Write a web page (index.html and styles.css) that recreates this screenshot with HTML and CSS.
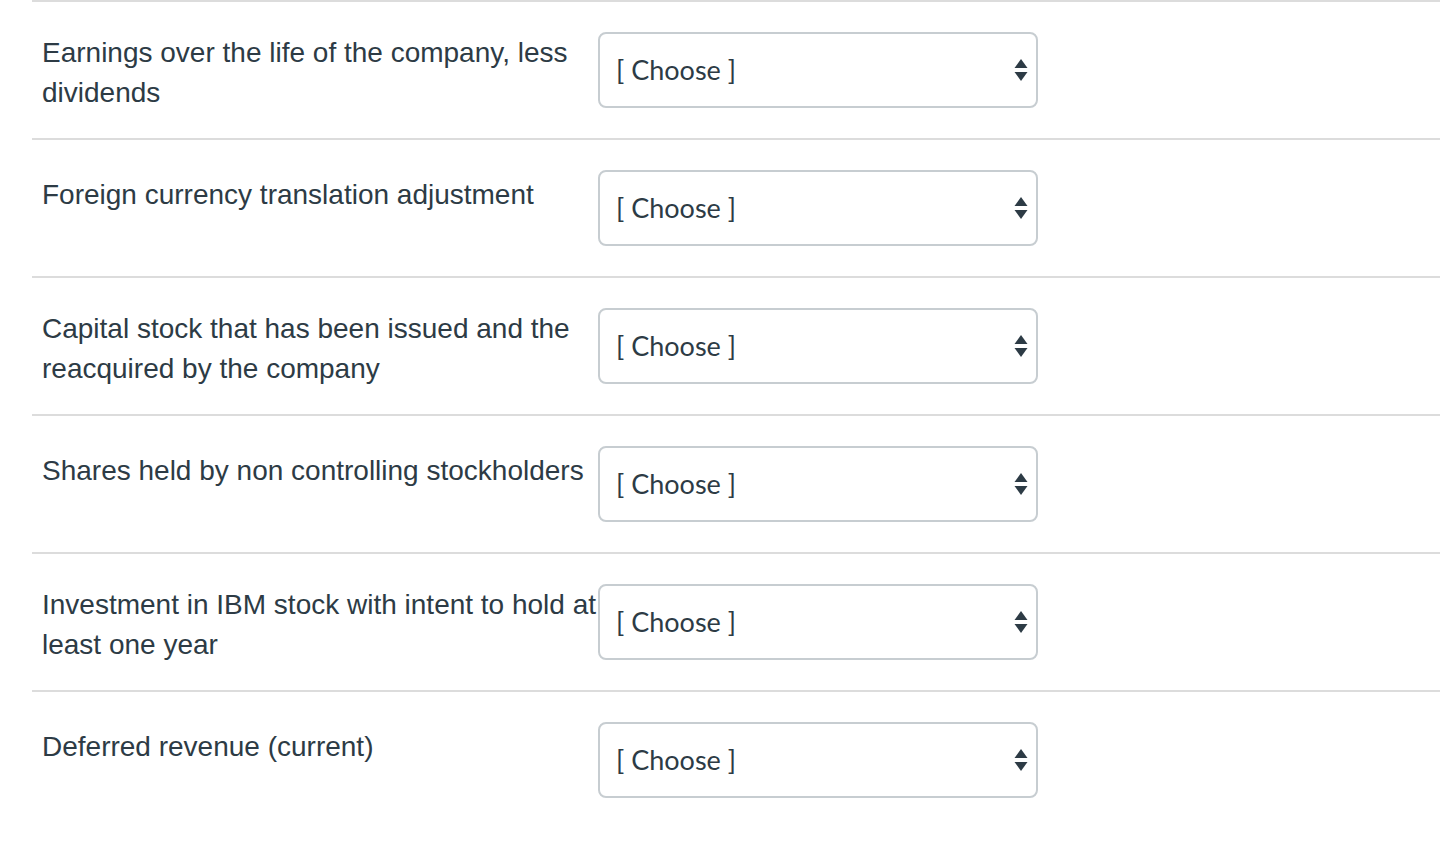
FILE: index.html
```html
<!DOCTYPE html>
<html lang="en">
<head>
<meta charset="utf-8">
<title>Matching</title>
<link rel="stylesheet" href="styles.css">
</head>
<body>
<div class="list">
  <div class="row">
    <div class="label">Earnings over the life of the company, less dividends</div>
    <div class="select"><span class="value">[ Choose ]</span><svg class="arrows" width="14" height="26" viewBox="0 0 14 26"><path d="M7 2 L13.5 11 L0.5 11 Z" fill="#2d3b45"/><path d="M0.5 15 L13.5 15 L7 24 Z" fill="#2d3b45"/></svg></div>
  </div>
  <div class="row">
    <div class="label single">Foreign currency translation adjustment</div>
    <div class="select"><span class="value">[ Choose ]</span><svg class="arrows" width="14" height="26" viewBox="0 0 14 26"><path d="M7 2 L13.5 11 L0.5 11 Z" fill="#2d3b45"/><path d="M0.5 15 L13.5 15 L7 24 Z" fill="#2d3b45"/></svg></div>
  </div>
  <div class="row">
    <div class="label">Capital stock that has been issued and the reacquired by the company</div>
    <div class="select"><span class="value">[ Choose ]</span><svg class="arrows" width="14" height="26" viewBox="0 0 14 26"><path d="M7 2 L13.5 11 L0.5 11 Z" fill="#2d3b45"/><path d="M0.5 15 L13.5 15 L7 24 Z" fill="#2d3b45"/></svg></div>
  </div>
  <div class="row">
    <div class="label single">Shares held by non controlling stockholders</div>
    <div class="select"><span class="value">[ Choose ]</span><svg class="arrows" width="14" height="26" viewBox="0 0 14 26"><path d="M7 2 L13.5 11 L0.5 11 Z" fill="#2d3b45"/><path d="M0.5 15 L13.5 15 L7 24 Z" fill="#2d3b45"/></svg></div>
  </div>
  <div class="row">
    <div class="label">Investment in IBM stock with intent to hold at least one year</div>
    <div class="select"><span class="value">[ Choose ]</span><svg class="arrows" width="14" height="26" viewBox="0 0 14 26"><path d="M7 2 L13.5 11 L0.5 11 Z" fill="#2d3b45"/><path d="M0.5 15 L13.5 15 L7 24 Z" fill="#2d3b45"/></svg></div>
  </div>
  <div class="row">
    <div class="label single">Deferred revenue (current)</div>
    <div class="select"><span class="value">[ Choose ]</span><svg class="arrows" width="14" height="26" viewBox="0 0 14 26"><path d="M7 2 L13.5 11 L0.5 11 Z" fill="#2d3b45"/><path d="M0.5 15 L13.5 15 L7 24 Z" fill="#2d3b45"/></svg></div>
  </div>
</div>
</body>
</html>
```
FILE: styles.css
```css
html, body {
  margin: 0;
  padding: 0;
  background: #ffffff;
}
body {
  font-family: "Liberation Sans", Arial, sans-serif;
  color: #2d3b45;
}
.list {
  margin-left: 32px;
  width: 1408px;
}
.row {
  display: flex;
  align-items: flex-start;
  box-sizing: border-box;
  height: 138px;
  border-top: 2px solid #dcdcdc;
  padding-top: 30px;
}
.label {
  box-sizing: border-box;
  width: 566px;
  padding-left: 10px;
  padding-top: 1px;
  font-size: 28px;
  line-height: 40px;
  flex: none;
}
.label.single {
  padding-top: 5px;
}
.select {
  box-sizing: border-box;
  width: 440px;
  height: 76px;
  border: 2px solid #c7cdd1;
  border-radius: 8px;
  display: flex;
  align-items: center;
  justify-content: space-between;
  padding: 0 8px 0 16px;
  background: #fff;
  flex: none;
}
.value {
  font-family: Lato, "Liberation Sans", sans-serif;
  font-size: 27px;
  color: #2d3b45;
  padding-bottom: 2px;
}
.arrows {
  display: block;
}
```
